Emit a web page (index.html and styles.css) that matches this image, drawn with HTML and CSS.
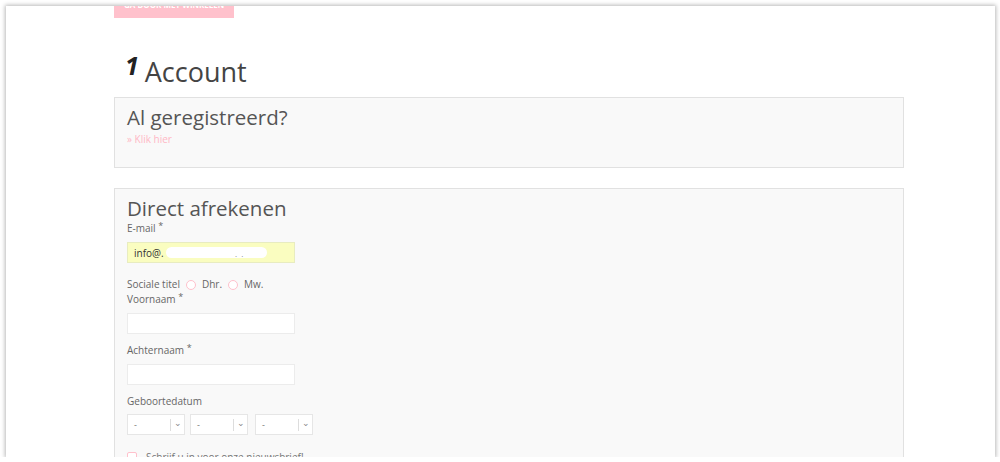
FILE: index.html
```html
<!DOCTYPE html>
<html lang="nl">
<head>
<meta charset="utf-8">
<title>Afrekenen</title>
<link rel="stylesheet" href="styles.css">
</head>
<body>
<div class="frame">
  <div class="content">
    <a class="btn-continue">Ga door met winkelen</a>
    <h1 class="step-title"><span class="step-num">1</span> Account</h1>

    <section class="box box-login">
      <h2 class="box-title">Al geregistreerd?</h2>
      <a class="link-pink">» Klik hier</a>
    </section>

    <section class="box box-guest">
      <h2 class="box-title">Direct afrekenen</h2>
      <label class="lbl">E-mail <sup>*</sup></label>
      <div class="input input-filled"><span class="val">info@.</span><span class="redact"></span><span class="dots">. .</span></div>

      <div class="radio-row">
        <span class="lbl-inline">Sociale titel</span>
        <span class="radio"></span><span class="opt">Dhr.</span>
        <span class="radio"></span><span class="opt">Mw.</span>
      </div>
      <label class="lbl lbl-tight">Voornaam <sup>*</sup></label>
      <div class="input"></div>

      <label class="lbl">Achternaam <sup>*</sup></label>
      <div class="input"></div>

      <label class="lbl">Geboortedatum</label>
      <div class="selects">
        <div class="select"><span>-</span><span class="caret">⌄</span></div>
        <div class="select"><span>-</span><span class="caret">⌄</span></div>
        <div class="select"><span>-</span><span class="caret">⌄</span></div>
      </div>

      <div class="check-row">
        <span class="checkbox"></span><span class="check-lbl">Schrijf u in voor onze nieuwsbrief!</span>
      </div>
    </section>
  </div>
</div>
</body>
</html>
```
FILE: styles.css
```css
html, body {
  margin: 0;
  padding: 0;
  background: #ffffff;
  overflow: hidden;
}
body {
  font-family: "Open Sans", "Noto Sans", sans-serif;
  color: #666;
}
.frame {
  margin: 6px 5px 0 6px;
  height: 451px;
  background: #fff;
  box-shadow: 0 0 4px 1px rgba(0,0,0,0.28);
  overflow: hidden;
}
.content {
  margin: -15px 0 0 108px;
  width: 790px;
}
.btn-continue {
  display: inline-block;
  background: #ffc1cc;
  color: #fff;
  font-size: 8px;
  font-weight: 700;
  text-transform: uppercase;
  padding: 8px 10px 7px;
  line-height: 12px;
}
.step-title {
  margin: 30px 0 0 11px;
  font-size: 27px;
  font-weight: 400;
  color: #444;
  line-height: 34px;
  height: 49px;
}
.step-num {
  font-weight: 700;
  font-style: italic;
  font-size: 25px;
  color: #222;
  vertical-align: 7px;
  margin-right: -1px;
}
.box {
  background: #f9f9f9;
  border: 1px solid #e1e1e1;
  padding: 6px 12px 0;
}
.box-login {
  height: 63px;
}
.box-guest {
  margin-top: 20px;
  height: 400px;
}
.box-title {
  margin: 0;
  font-size: 20.5px;
  font-weight: 400;
  color: #555;
  line-height: 24px;
  padding-top: 1px;
}
.box-login .box-title { margin-bottom: 3px; }
.link-pink {
  display: block;
  color: #ffb8c5;
  font-size: 10px;
  line-height: 14px;
}
.lbl {
  display: block;
  font-size: 10px;
  color: #666;
  line-height: 13px;
  margin-top: 10px;
}
.box-guest .box-title + .lbl { margin-top: 2px; }
.lbl sup {
  font-size: 9px;
  vertical-align: 3px;
  line-height: 0;
}
.lbl-tight { margin-top: 2px; }
.input {
  margin-top: 7px;
  width: 166px;
  height: 19px;
  border: 1px solid #ececec;
  background: #fff;
  display: flex;
  align-items: center;
  font-size: 10px;
  color: #333;
  position: relative;
}
.input-filled {
  background: #fafdc0;
  border-color: #e8ecc0;
  margin-top: 7px;
}
.val { margin-left: 6px; }
.redact {
  position: absolute;
  left: 38px;
  top: 4px;
  width: 101px;
  height: 11px;
  border-radius: 6px;
  background: #fff;
}
.dots {
  position: absolute;
  left: 107px;
  top: 5px;
  font-size: 8px;
  color: #888;
  letter-spacing: 1px;
}
.radio-row {
  display: flex;
  align-items: center;
  margin-top: 14px;
  font-size: 10px;
  height: 14px;
}
.lbl-inline { color: #666; }
.radio {
  width: 8px;
  height: 8px;
  border: 1px solid #ffc1cc;
  border-radius: 50%;
  margin: 2px 6px 0 6px;
  background: #fff;
}
.opt { color: #666; }
.selects {
  display: flex;
  gap: 5px;
  margin-top: 6px;
}
.select {
  width: 58px;
  height: 21px;
  border: 1px solid #e6e6e6;
  background: #fff;
  display: flex;
  align-items: center;
  justify-content: space-between;
  font-size: 9px;
  color: #777;
  padding-left: 6px;
  box-sizing: border-box;
}
.select + .select + .select { margin-left: 2px; }
.caret {
  border-left: 1px solid #ddd;
  height: 12px;
  width: 13px;
  text-align: center;
  line-height: 8px;
  color: #888;
  font-size: 9px;
}
.check-row {
  display: flex;
  align-items: center;
  margin-top: 15px;
  font-size: 10px;
}
.checkbox {
  width: 8px;
  height: 8px;
  border: 1px solid #ffc1cc;
  border-radius: 2px;
  margin-right: 9px;
  background: #fff;
}
.check-lbl { color: #777; }
```
